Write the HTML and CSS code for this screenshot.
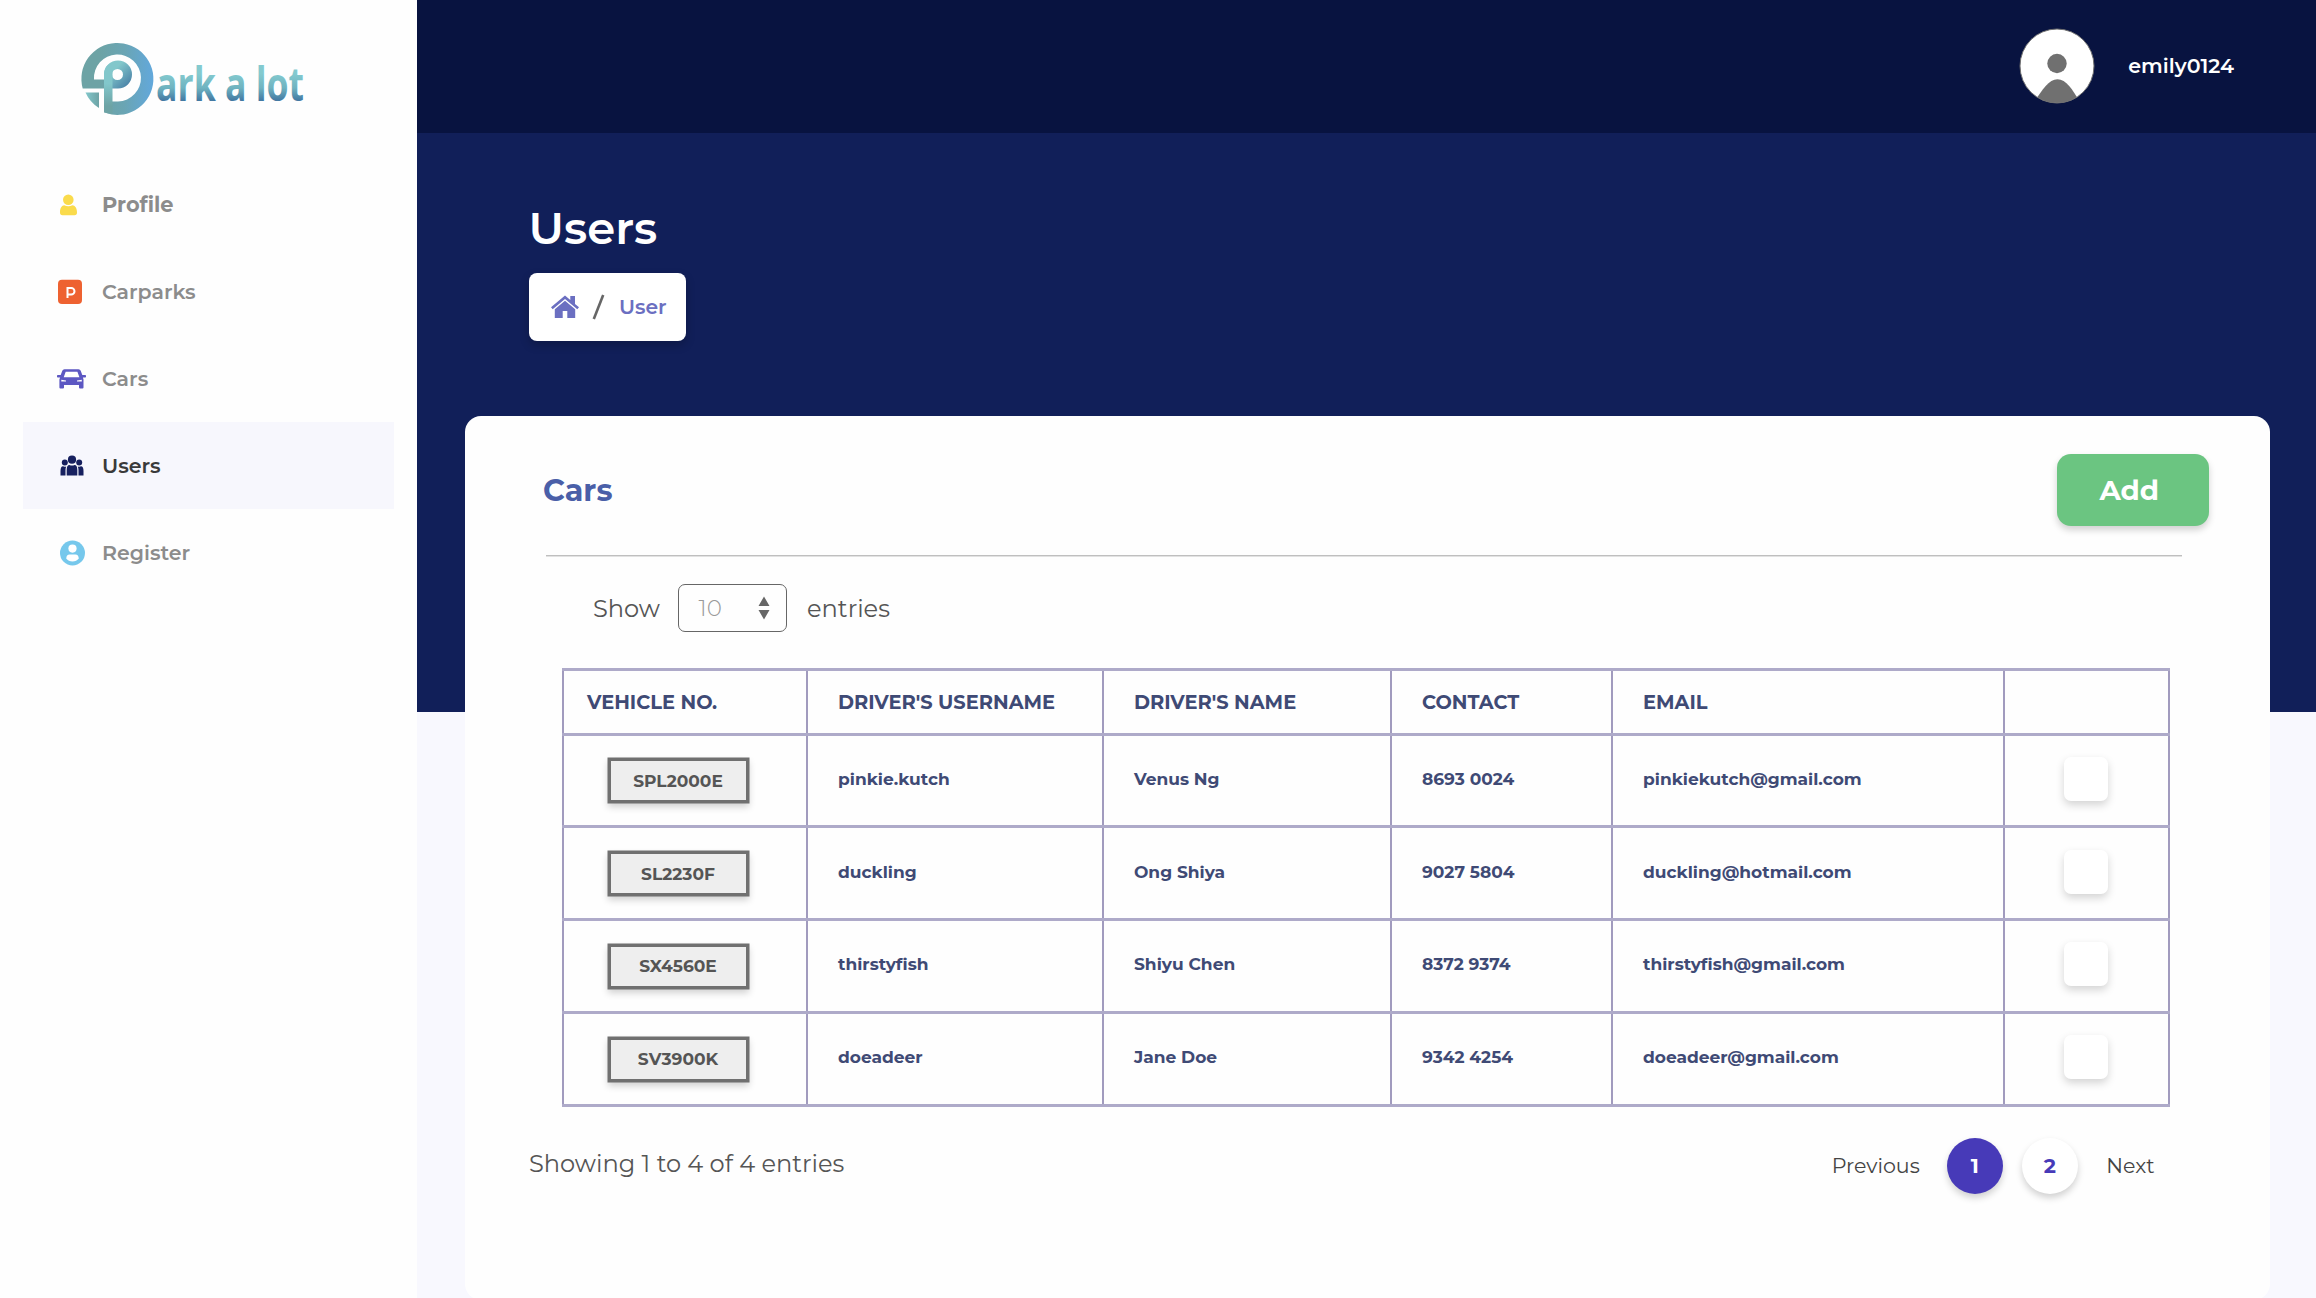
FILE: index.html
```html
<!DOCTYPE html>
<html lang="en">
<head>
<meta charset="utf-8">
<title>Park a lot - Users</title>
<link rel="stylesheet" href="styles.css">
</head>
<body>
<aside class="sidebar">
  <svg class="logo" viewBox="0 0 240 90" width="240" height="90">
    <defs>
      <linearGradient id="ring" x1="0" x2="1" y1="0" y2="0"><stop offset=".25" stop-color="#6da3a5"/><stop offset=".6" stop-color="#6aa5b4"/><stop offset="1" stop-color="#62a8dc"/></linearGradient>
      <linearGradient id="inner" x1="0" y1="0" x2="1" y2="1"><stop offset=".35" stop-color="#82c7cb"/><stop offset="1" stop-color="#3f74a0"/></linearGradient>
      <linearGradient id="stem" x1="0" y1="0" x2="0" y2="1"><stop offset=".4" stop-color="#82c7cb"/><stop offset=".85" stop-color="#6da3a5"/></linearGradient>
      <linearGradient id="corner" x1="0" y1="0" x2="1" y2="0"><stop offset="0" stop-color="#82c7cb"/><stop offset="1" stop-color="#6da3a5"/></linearGradient>
      <linearGradient id="word" x1="0" y1="0" x2="0" y2="1"><stop offset=".35" stop-color="#84cacf"/><stop offset=".58" stop-color="#6fb3c0"/><stop offset=".8" stop-color="#3f74a0"/></linearGradient>
    </defs>
    <path fill="url(#ring)" d="M1.700 47.500A36 36 0 1 1 23 71.300V60.500H37A23.500 23.500 0 1 0 13 38.500H24V47.500Z"/>
    <path fill="url(#corner)" d="M4.500 51.500H18V67A34 34 0 0 1 4.500 51.500Z"/>
    <path fill="url(#inner)" fill-rule="evenodd" d="M23 33.500A14 14 0 1 1 37 47.500H23ZM31 33.500A5.500 5.500 0 1 0 42 33.500A5.500 5.500 0 1 0 31 33.500Z"/>
    <path fill="url(#stem)" d="M23 33.500Q23 26 29 22.500L31.500 30V72.500Q27 72.500 23 71.300Z"/>
    <text class="wordmark" x="75" y="60" textLength="148" lengthAdjust="spacingAndGlyphs" fill="url(#word)">ark a lot</text>
  </svg>
  <nav class="nav">
    <a class="nav-item nav-profile">
      <svg width="36" height="30" viewBox="0 0 36 30" fill="#fadb4c"><circle cx="13.300" cy="9.800" r="5.300"/><path d="M5 22.500C5 18 6.800 15.400 9.200 15.300Q13.300 17.200 17.400 15.300C20 15.400 22 18 22 22.500Q22 25.200 19.500 25.200H7.500Q5 25.200 5 22.500Z"/></svg>
      <span>Profile</span>
    </a>
    <a class="nav-item">
      <svg width="36" height="30" viewBox="0 0 36 30"><rect x="3" y="2.700" width="24" height="24.300" rx="4" fill="#ee6231"/><path d="M12.500 21V11H16.200A3.300 3.300 0 0 1 16.200 17.600H12.500" fill="none" stroke="#fff" stroke-width="2"/></svg>
      <span>Carparks</span>
    </a>
    <a class="nav-item">
      <svg width="36" height="30" viewBox="0 0 36 30" fill="#5c57c2"><path fill-rule="evenodd" d="M9.500 5.300H23.500Q25.200 5.300 25.700 6.800L27.300 11H30.200Q31 11 31 11.700V12.700Q31 13.400 30.200 13.400H27.900L28.500 15.500V23.500Q28.500 24.500 27.500 24.500H25Q24 24.500 24 23.500V21H9V23.500Q9 24.500 8 24.500H5.400Q4.400 24.500 4.400 23.500V15.500L5.100 13.400H2.800Q2 13.400 2 12.700V11.700Q2 11 2.800 11H5.700L7.300 6.800Q7.800 5.300 9.500 5.300ZM10.700 7.800 8.700 13.300H24.400L22.400 7.800ZM6.300 15.800V17.500H11V16.500ZM26.800 15.800V17.500H22V16.500Z"/></svg>
      <span>Cars</span>
    </a>
    <a class="nav-item active">
      <svg width="36" height="30" viewBox="0 0 36 30" fill="#17205f"><circle cx="17" cy="8.700" r="4.100"/><circle cx="9.800" cy="11.600" r="3"/><circle cx="24.200" cy="11.600" r="3"/><path d="M11.700 24.600V19Q11.700 14 14.500 14Q17 15 19.500 14Q22.300 14 22.300 19V24.600ZM10.500 24.600H5.500V20Q5.500 15.500 8 15.300Q9.500 16 11.200 15.400Q10.500 17 10.500 19ZM23.500 24.600H28.500V20Q28.500 15.500 26 15.300Q24.500 16 22.800 15.400Q23.500 17 23.500 19Z"/></svg>
      <span>Users</span>
    </a>
    <a class="nav-item">
      <svg width="36" height="30" viewBox="0 0 36 30"><circle cx="17.500" cy="15" r="12.500" fill="#76c8ec"/><circle cx="17.500" cy="10.600" r="4.100" fill="#fff"/><path fill="#fff" d="M11.200 20.500Q11.500 16.500 14.500 16.500H20.500Q23.500 16.500 23.800 20.500Q21.500 23.500 17.500 23.500Q13.500 23.500 11.200 20.500Z"/></svg>
      <span>Register</span>
    </a>
  </nav>
</aside>

<main class="main">
  <header class="topbar">
    <svg width="76" height="76" viewBox="0 0 76 76"><defs><clipPath id="face"><circle cx="38" cy="38" r="37"/></clipPath></defs><circle cx="38" cy="38" r="37" fill="#fff"/><g clip-path="url(#face)" fill="#707070"><circle cx="38" cy="35.500" r="9.700"/><path d="M16 73C23 62 30 51.300 38.500 51.300S54 62 60 73V76H16Z"/></g><circle cx="38" cy="38" r="37" fill="none" stroke="#707070"/></svg>
    <span class="account">emily0124</span>
  </header>

  <section class="page-head">
    <h1>Users</h1>
    <div class="breadcrumb">
      <svg width="28" height="24" viewBox="0 0 28 24" fill="#6b6fc1"><path d="M14 .5 19.300 5V1H24V9L28 12.200 26.300 14.200 14 4 1.700 14.200 0 12.200Z"/><path d="M14 5.800 24.200 14.200V23H16.300V16H11.700V23H3.800V14.200Z"/></svg>
      <svg width="13" height="26" viewBox="0 0 13 26"><path d="M1.800 25 11.200 1" stroke="#666" stroke-width="2.600"/></svg>
      <span>User</span>
    </div>
  </section>

  <section class="card">
    <div class="card-head">
      <h2>Cars</h2>
      <button class="add">Add</button>
    </div>
    <hr>
    <div class="length">
      <span>Show</span>
      <div class="select">
        <span>10</span>
        <svg width="12" height="24" viewBox="0 0 12 24" fill="#666"><path d="M6 .5 11.500 10H.5ZM6 23.500 11.500 14H.5Z"/></svg>
      </div>
      <span>entries</span>
    </div>
    <table>
      <colgroup><col class="c1"><col class="c2"><col class="c3"><col class="c4"><col class="c5"><col class="c6"></colgroup>
      <thead>
        <tr><th>VEHICLE NO.</th><th>DRIVER'S USERNAME</th><th>DRIVER'S NAME</th><th>CONTACT</th><th>EMAIL</th><th></th></tr>
      </thead>
      <tbody>
        <tr><td><div class="plate">SPL2000E</div></td><td>pinkie.kutch</td><td>Venus Ng</td><td>8693 0024</td><td>pinkiekutch@gmail.com</td><td><div class="check"></div></td></tr>
        <tr><td><div class="plate">SL2230F</div></td><td>duckling</td><td>Ong Shiya</td><td>9027 5804</td><td>duckling@hotmail.com</td><td><div class="check"></div></td></tr>
        <tr><td><div class="plate">SX4560E</div></td><td>thirstyfish</td><td>Shiyu Chen</td><td>8372 9374</td><td>thirstyfish@gmail.com</td><td><div class="check"></div></td></tr>
        <tr><td><div class="plate">SV3900K</div></td><td>doeadeer</td><td>Jane Doe</td><td>9342 4254</td><td>doeadeer@gmail.com</td><td><div class="check"></div></td></tr>
      </tbody>
    </table>
    <footer class="card-foot">
      <span class="summary">Showing 1 to 4 of 4 entries</span>
      <div class="pager">
        <span class="prev">Previous</span>
        <span class="page current">1</span>
        <span class="page">2</span>
        <span class="next">Next</span>
      </div>
    </footer>
  </section>
</main>
</body>
</html>
```
FILE: styles.css
```css
* { box-sizing: border-box; }

body {
  margin: 0;
  height: 1298px;
  overflow: hidden;
  display: grid;
  grid-template-columns: 416.5px 1fr;
  font-family: Montserrat, Inter, sans-serif;
  font-variant-ligatures: none;
  background: #fefefe;
}

svg { display: block; flex: none; }

/* Sidebar */
.logo { margin: 41px 0 0 80.5px; overflow: visible; }
.wordmark { font: 700 46px "Open Sans", sans-serif; }
.nav { margin: 30px 22.5px 0 23px; }
.nav-item {
  display: flex;
  align-items: center;
  height: 87px;
  padding-left: 32px;
  gap: 11px;
  font-size: 20.5px;
  line-height: 26px;
  font-weight: 600;
  color: #8c8c8c;
}
.nav-profile { font-size: 20.9px; font-weight: 700; }
.nav-item.active { background: #f7f7fd; color: #3a3a3a; }

/* Main area */
.main {
  height: 1298px;
  overflow: hidden;
  background: linear-gradient(#111f59 712px, #f8f8fe 712px);
}
.topbar {
  display: flex;
  align-items: center;
  justify-content: flex-end;
  gap: 33px;
  height: 133px;
  padding: 0 82px 2px 0;
  background: #081340;
}
.account { color: #fff; font-size: 20.6px; font-weight: 600; }

.page-head { height: 282.5px; padding: 69px 0 0 112.500px; }
h1 {
  margin: 0 0 18.5px -.5px;
  font-size: 45px;
  line-height: 52px;
  font-weight: 600;
  color: #fff;
}
.breadcrumb {
  display: flex;
  align-items: center;
  width: 157px;
  height: 68px;
  padding-left: 22px;
  border-radius: 8px;
  background: #fff;
  box-shadow: 0 4px 10px rgba(0, 0, 0, .22);
  font-size: 20.3px;
  font-weight: 600;
  color: #6b6fc1;
}
.breadcrumb svg + svg { margin: 0 14px 0 13px; }

/* Card */
.card {
  height: 884.5px;
  margin: 0 46px 0 48.5px;
  border-radius: 16px;
  background: #fefefe;
}
.card-head {
  display: flex;
  align-items: center;
  justify-content: space-between;
  padding: 38.5px 61.500px 29px 78px;
}
h2 { margin: 0; font-size: 30.2px; font-weight: 700; color: #4a5fa8; }
.add {
  width: 151.5px;
  height: 72px;
  padding: 0 7px 0 0;
  border: 0;
  border-radius: 14px;
  background: #6bc581;
  box-shadow: 0 4px 7px rgba(0, 0, 0, .18);
  color: #fff;
  font: 700 27.8px Montserrat, Inter, sans-serif;
}
hr {
  height: 2px;
  margin: 0 88px 0 81px;
  border: 0;
  border-top: 1px solid #bfbfbf;
  border-bottom: 1px solid #e2e2e2;
}
.length {
  display: flex;
  align-items: center;
  margin: 27px 0 0 128px;
  font-size: 24.1px;
  font-weight: 400;
  color: #555;
}
.select {
  display: flex;
  align-items: center;
  justify-content: space-between;
  width: 109px;
  height: 48px;
  margin: 0 20.5px 0 17.5px;
  padding: 0 16px 0 20px;
  border: 1px solid #666;
  border-radius: 7px;
  font-size: 23px;
  font-weight: 300;
  color: #999;
}

/* Table */
table {
  width: 1608px;
  margin: 35.5px 0 0 97px;
  table-layout: fixed;
  border-collapse: collapse;
}
.c1 { width: 244px; }
.c2 { width: 296px; }
.c3 { width: 288px; }
.c4 { width: 221px; }
.c5 { width: 392px; }
.c6 { width: 165px; }
th, td {
  border-width: 3px 2px;
  border-style: solid;
  border-color: #aeaac9 #a19bbe;
  padding: 0 0 0 30px;
  text-align: left;
  color: #3f4a75;
}
th { height: 65px; padding-top: 1px; font-size: 19.4px; white-space: nowrap; }
th:first-child { padding-left: 23px; }
td { height: 92.8px; padding-bottom: 3px; font-size: 17.05px; font-weight: 700; }
td:first-child { padding: 1px 0 0 43.5px; }
td:last-child { padding: 0 0 3px 59px; }
.plate {
  display: flex;
  align-items: center;
  justify-content: center;
  width: 141px;
  height: 45px;
  border: 3px solid #707070;
  background: #eee;
  box-shadow: 0 0 0 .5px #707070, 0 4px 7px rgba(0, 0, 0, .18);
  color: #555;
}
.check {
  width: 44px;
  height: 44px;
  border-radius: 7px;
  background: #fff;
  box-shadow: 0 4px 8px rgba(0, 0, 0, .17);
}

/* Footer */
.card-foot {
  display: flex;
  justify-content: space-between;
  padding: 31px 115.5px 0 64px;
}
.summary {
  line-height: 52px;
  font-size: 24.1px;
  color: #555;
}
.pager {
  display: flex;
  align-items: center;
  font-size: 20.6px;
  color: #444;
}
.page {
  display: flex;
  align-items: center;
  justify-content: center;
  width: 56px;
  height: 56px;
  border-radius: 50%;
  background: #fff;
  box-shadow: 0 4px 7px rgba(0, 0, 0, .18);
  font-weight: 700;
  color: #473ab8;
}
.prev { margin-right: 27px; }
.current { margin-right: 19px; background: #473ab8; color: #fff; }
.next { margin-left: 28.5px; }
```
